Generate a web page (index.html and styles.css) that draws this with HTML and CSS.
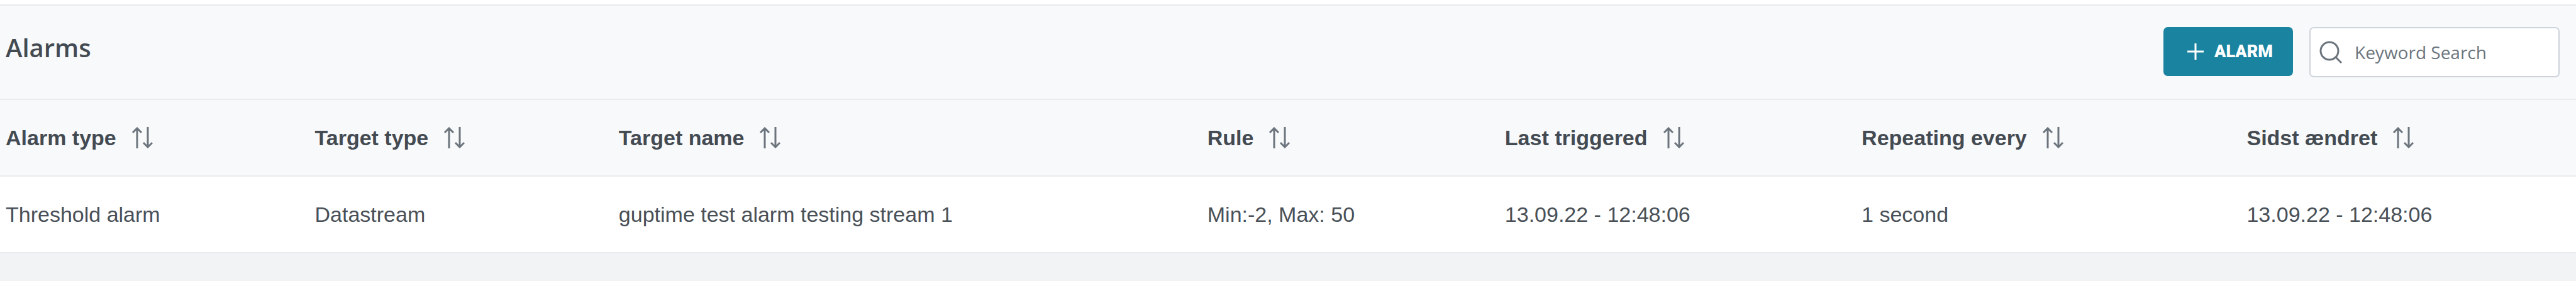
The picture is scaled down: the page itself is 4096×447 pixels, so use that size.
FILE: index.html
```html
<!DOCTYPE html>
<html lang="en">
<head>
    <meta charset="utf-8">
    <meta name="viewport" content="width=device-width, initial-scale=1">
    <title>Alarms</title>
    <link rel="stylesheet" href="styles.css">
</head>
<body>
    <!-- Shared icons -->
    <svg class="sprite" aria-hidden="true">
        <symbol id="sort" viewBox="0 0 34 34">
            <path d="M9 34V2M2 9l7-7 7 7M26 0v32M19 25l7 7 7-7"/>
        </symbol>
    </svg>

    <main class="panel">
        <div class="panel-header">
            <h1>Alarms</h1>
            <div class="actions">
                <button class="add-button" type="button">
                    <svg class="plus-icon" viewBox="0 0 32 32" aria-hidden="true"><path d="M16 3v26M3 16h26"/></svg>
                    ALARM
                </button>
                <label class="search">
                    <svg class="search-icon" viewBox="0 0 36 36" aria-hidden="true"><circle cx="16" cy="16" r="14"/><path d="M26 26l9 9"/></svg>
                    <input type="text" placeholder="Keyword Search" aria-label="Keyword Search">
                </label>
            </div>
        </div>

        <table class="alarm-table">
            <colgroup>
                <col class="col-type">
                <col class="col-target">
                <col class="col-name">
                <col class="col-rule">
                <col class="col-triggered">
                <col class="col-repeat">
                <col class="col-changed">
            </colgroup>
            <thead>
                <tr>
                    <th><button class="sort" type="button">Alarm type <svg><use href="#sort"/></svg></button></th>
                    <th><button class="sort" type="button">Target type <svg><use href="#sort"/></svg></button></th>
                    <th><button class="sort" type="button">Target name <svg><use href="#sort"/></svg></button></th>
                    <th><button class="sort" type="button">Rule <svg><use href="#sort"/></svg></button></th>
                    <th><button class="sort" type="button">Last triggered <svg><use href="#sort"/></svg></button></th>
                    <th><button class="sort" type="button">Repeating every <svg><use href="#sort"/></svg></button></th>
                    <th><button class="sort" type="button">Sidst ændret <svg><use href="#sort"/></svg></button></th>
                </tr>
            </thead>
            <tbody>
                <tr>
                    <td>Threshold alarm</td>
                    <td>Datastream</td>
                    <td>guptime test alarm testing stream 1</td>
                    <td>Min:-2, Max: 50</td>
                    <td>13.09.22 - 12:48:06</td>
                    <td>1 second</td>
                    <td>13.09.22 - 12:48:06</td>
                </tr>
            </tbody>
        </table>
    </main>
</body>
</html>
```

FILE: styles.css
```css
* {
    box-sizing: border-box;
}

body {
    margin: 0;
    background-color: #f1f3f5;
    color: #495057;
    font-family: "Liberation Sans", Arial, sans-serif;
    font-size: 34px;
}

.sprite {
    display: none;
}

svg {
    flex: none;
    fill: none;
    stroke: currentColor;
    stroke-width: 3px;
}

.panel {
    padding-top: 7px;
    background-color: #ffffff;
}

.panel-header {
    display: flex;
    justify-content: space-between;
    align-items: flex-start;
    padding: 34px 26px 34px 9px;
    background-color: #f8f9fb;
    border-top: 2px solid #e9ecef;
    border-bottom: 2px solid #e9ecef;
}

h1 {
    margin: 0;
    color: #434a51;
    font-family: "Open Sans", sans-serif;
    font-size: 40px;
    font-weight: 600;
    line-height: 66px;
}

.actions {
    display: flex;
    align-items: flex-start;
    gap: 26px;
}

.add-button {
    display: flex;
    align-items: center;
    gap: 14px;
    height: 78px;
    padding: 0 32px 0 35px;
    border: none;
    border-radius: 7px;
    background-color: #1a84a0;
    color: #ffffff;
    font-family: Roboto, sans-serif;
    font-size: 27px;
    font-weight: 900;
    cursor: pointer;
}

.plus-icon {
    width: 32px;
    height: 32px;
}

.search {
    display: flex;
    align-items: center;
    gap: 20px;
    width: 398px;
    height: 80px;
    padding: 0 14px;
    border: 2px solid #ced4da;
    border-radius: 7px;
    background-color: #ffffff;
    color: #6c757d;
}

.search-icon {
    width: 36px;
    height: 36px;
}

.search input {
    flex: 1;
    min-width: 0;
    padding: 0;
    border: none;
    outline: none;
    background: transparent;
    color: #495057;
    font-family: "Open Sans", sans-serif;
    font-size: 28px;
}

.search input::placeholder {
    color: #6c757d;
    opacity: 1;
}

.alarm-table {
    width: 100%;
    border-collapse: separate;
    border-spacing: 0;
    table-layout: fixed;
}

.col-type { width: 12%; }
.col-target { width: 11.8%; }
.col-name { width: 22.85%; }
.col-rule { width: 11.55%; }
.col-triggered { width: 13.85%; }
.col-repeat { width: 14.95%; }

th, td {
    height: 122px;
    padding: 0 9px;
    border-bottom: 2px solid #e9ecef;
    text-align: left;
    white-space: nowrap;
}

th {
    background-color: #f8f9fb;
}

.sort {
    display: flex;
    align-items: center;
    gap: 24px;
    padding: 0;
    border: none;
    background: none;
    color: #434a51;
    font-family: inherit;
    font-size: 34px;
    font-weight: 700;
    cursor: pointer;
}

.sort svg {
    width: 34px;
    height: 34px;
    color: #6c757d;
}
```
